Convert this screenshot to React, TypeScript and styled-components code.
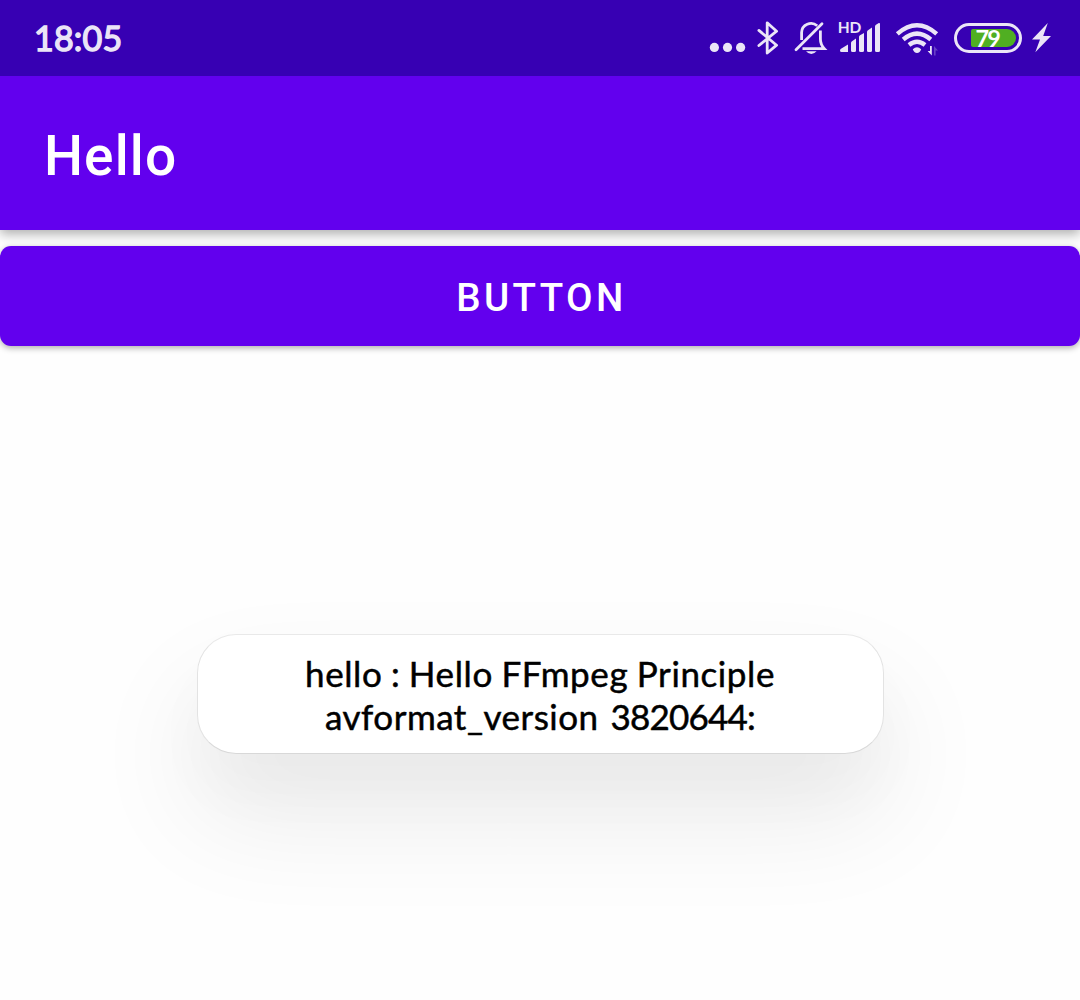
import React from "react";
import styled, { createGlobalStyle } from "styled-components";

const tint = "#ebe5f7";

const GlobalStyle = createGlobalStyle`
  body {
    margin: 0;
    background: #fefefe;
  }
`;

const Screen = styled.div`
  width: 1080px;
  height: 1000px;
  overflow: hidden;
  display: flex;
  flex-direction: column;
  font-family: Roboto, sans-serif;
`;

const StatusBar = styled.header`
  height: 76px;
  flex: none;
  box-sizing: border-box;
  padding: 0 29px 0 34px;
  display: flex;
  align-items: center;
  justify-content: space-between;
  background: #3700b3;
`;

const Clock = styled.time`
  font: 400 34px/44px Lato, sans-serif;
  letter-spacing: 0.2px;
  color: ${tint};
  -webkit-text-stroke: 1.4px ${tint};
`;

const StatusIcons = styled.div`
  display: flex;
  height: 76px;
`;

const Glyph = styled.svg<{ $gap?: number }>`
  display: block;
  flex: none;
  margin-left: ${(p) => p.$gap ?? 0}px;
  color: ${tint};
`;

const SmallLabel = styled.text`
  font: 700 15.5px Lato, sans-serif;
  fill: currentColor;
`;

const ChargeLabel = styled.text`
  font: 700 23.5px Lato, sans-serif;
  fill: #fff;
`;

const AppBar = styled.div`
  height: 154px;
  flex: none;
  box-sizing: border-box;
  padding: 6px 44px 0;
  display: flex;
  align-items: center;
  background: #6200ee;
  box-shadow: 0 4px 11px rgba(0, 0, 0, 0.32);
  clip-path: inset(0 0 -24px 0);
`;

const Title = styled.h1`
  margin: 0;
  font-size: 55px;
  line-height: 64px;
  font-weight: 500;
  letter-spacing: 1.1px;
  color: #fff;
`;

const Content = styled.main`
  flex: 1;
  display: flex;
  flex-direction: column;
  align-items: center;
  padding-top: 16px;
`;

const ActionButton = styled.button`
  width: 100%;
  height: 100px;
  border: 0;
  border-radius: 11px;
  padding: 4px 0 0 3px;
  background: #6200ee;
  color: #fff;
  font: 500 38.5px/48px Roboto, sans-serif;
  letter-spacing: 3.4px;
  box-shadow: 0 2px 6px rgba(0, 0, 0, 0.32);
`;

const Toast = styled.div`
  box-sizing: border-box;
  width: 687px;
  height: 120px;
  margin-top: 288px;
  padding-top: 17px;
  border: 1px solid #e3e3e3;
  border-top-color: #e9e9e9;
  border-bottom-color: #d8d8d8;
  border-radius: 39px;
  background: #fff;
  box-shadow: 0 60px 110px 6px rgba(0, 0, 0, 0.075), 0 40px 60px rgba(0, 0, 0, 0.025);
  display: flex;
  flex-direction: column;
  align-items: center;
`;

const ToastLine = styled.span<{ $spacing: number; $wordGap: number }>`
  font: 400 35px/43px Lato, sans-serif;
  letter-spacing: ${(p) => p.$spacing}px;
  word-spacing: ${(p) => p.$wordGap}px;
  color: #000;
  white-space: pre;
  -webkit-text-stroke: 0.5px #000;
`;

const VersionNumber = styled.span`
  letter-spacing: -0.8px;
`;

const MoreIcon = () => (
  <Glyph width="40" height="76" viewBox="708 0 40 76" fill="currentColor">
    <circle cx="714.4" cy="47.4" r="4.6" />
    <circle cx="727.5" cy="47.4" r="4.6" />
    <circle cx="740.6" cy="47.4" r="4.6" />
  </Glyph>
);

const BluetoothIcon = () => (
  <Glyph width="24" height="76" viewBox="756 0 24 76" $gap={8} fill="none" stroke="currentColor" strokeWidth="2.8" strokeLinecap="round" strokeLinejoin="round">
    <path d="M758.9 30.4 L776.6 45.2 L767.2 53 V22.8 L776.6 31.2 L758.9 45.5" />
  </Glyph>
);

const MutedBellIcon = () => (
  <Glyph width="34" height="76" viewBox="794 0 34 76" $gap={14} fill="none" stroke="currentColor" strokeWidth="2.8">
    <path d="M801.6 40 V32.5 A9.4 9.2 0 0 1 817.2 25.8" />
    <path d="M820.4 30.5 V39 C820.4 44 822.3 46.5 824.3 48.7 H802.5" />
    <path d="M796 49.8 L822 23.7" strokeLinecap="round" />
    <path d="M806 51.2 H816.6 Q811.3 56.8 806 51.2 Z" fill="currentColor" stroke="none" />
  </Glyph>
);

const SignalIcon = () => (
  <Glyph width="46" height="76" viewBox="837 0 46 76" $gap={9} fill="currentColor">
    <SmallLabel x="837.8" y="33" textLength="23.5">HD</SmallLabel>
    <path d="M840 50.5 Q840 49.3 841 48.8 L848 44.5 V52 H841.5 Q840 52 840 50.5Z" />
    <path d="M851 43 Q851 41.8 852 41.2 L856 38.5 V50.5 Q856 52 854.5 52 H852.5 Q851 52 851 50.5Z" />
    <path d="M859 37 Q859 36 860 35.3 L864 33 V50.5 Q864 52 862.5 52 H860.5 Q859 52 859 50.5Z" />
    <path d="M867 32 Q867 31 868 30.3 L872 27.5 V50.5 Q872 52 870.5 52 H868.5 Q867 52 867 50.5Z" />
    <path d="M875 26.5 Q875 25.4 876 24.8 L878.8 23 Q880 22.5 880 24 V50.5 Q880 52 878.5 52 H876.5 Q875 52 875 50.5Z" />
  </Glyph>
);

const WifiIcon = () => (
  <Glyph width="46" height="76" viewBox="895 0 46 76" $gap={12} fill="none" stroke="currentColor" strokeWidth="4.4">
    <path d="M897.3 33.8 Q917 16.6 936.7 33.8" />
    <path d="M903.2 39.5 Q917 27.7 930.8 39.5" />
    <path d="M909 45 Q917 38.6 925 45" />
    <path d="M912.8 49.3 Q917 45 921.2 49.3 Q920 53 917 53 Q914 53 912.8 49.3Z" fill="currentColor" stroke="none" />
    <path d="M930 46 H931.8 V55.5 L927.6 51 H930Z" fill="currentColor" stroke="none" />
    <path d="M934 55.5 V46 L938 50.5 H935.6 V55.5Z" fill="currentColor" stroke="none" opacity="0.28" />
  </Glyph>
);

const BatteryIcon = () => (
  <Glyph width="68" height="76" viewBox="954 0 68 76" $gap={13}>
    <rect x="955.5" y="24.5" width="65" height="27" rx="13.5" fill="none" stroke="currentColor" strokeWidth="3" />
    <path d="M973 29 H1007 A9 9 0 0 1 1007 47 H973 Q971 47 971 45 V31 Q971 29 973 29Z" fill="#50af22" />
    <ChargeLabel x="975.5" y="46.6" textLength="25.5">79</ChargeLabel>
  </Glyph>
);

const BoltIcon = () => (
  <Glyph width="20" height="76" viewBox="1031 0 20 76" $gap={9} fill="currentColor">
    <path d="M1047.8 23 L1032 39.5 H1040 L1035.3 52.3 L1051 36 H1043.2 Z" />
  </Glyph>
);

export default function App() {
  return (
    <>
      <GlobalStyle />
      <Screen>
        <StatusBar>
          <Clock>18:05</Clock>
          <StatusIcons>
            <MoreIcon />
            <BluetoothIcon />
            <MutedBellIcon />
            <SignalIcon />
            <WifiIcon />
            <BatteryIcon />
            <BoltIcon />
          </StatusIcons>
        </StatusBar>
        <AppBar>
          <Title>Hello</Title>
        </AppBar>
        <Content>
          <ActionButton type="button">BUTTON</ActionButton>
          <Toast role="status">
            <ToastLine $spacing={0.6} $wordGap={-1}>hello : Hello FFmpeg Principle</ToastLine>
            <ToastLine $spacing={0.5} $wordGap={2.5}>
              avformat_version <VersionNumber>3820644:</VersionNumber>
            </ToastLine>
          </Toast>
        </Content>
      </Screen>
    </>
  );
}
